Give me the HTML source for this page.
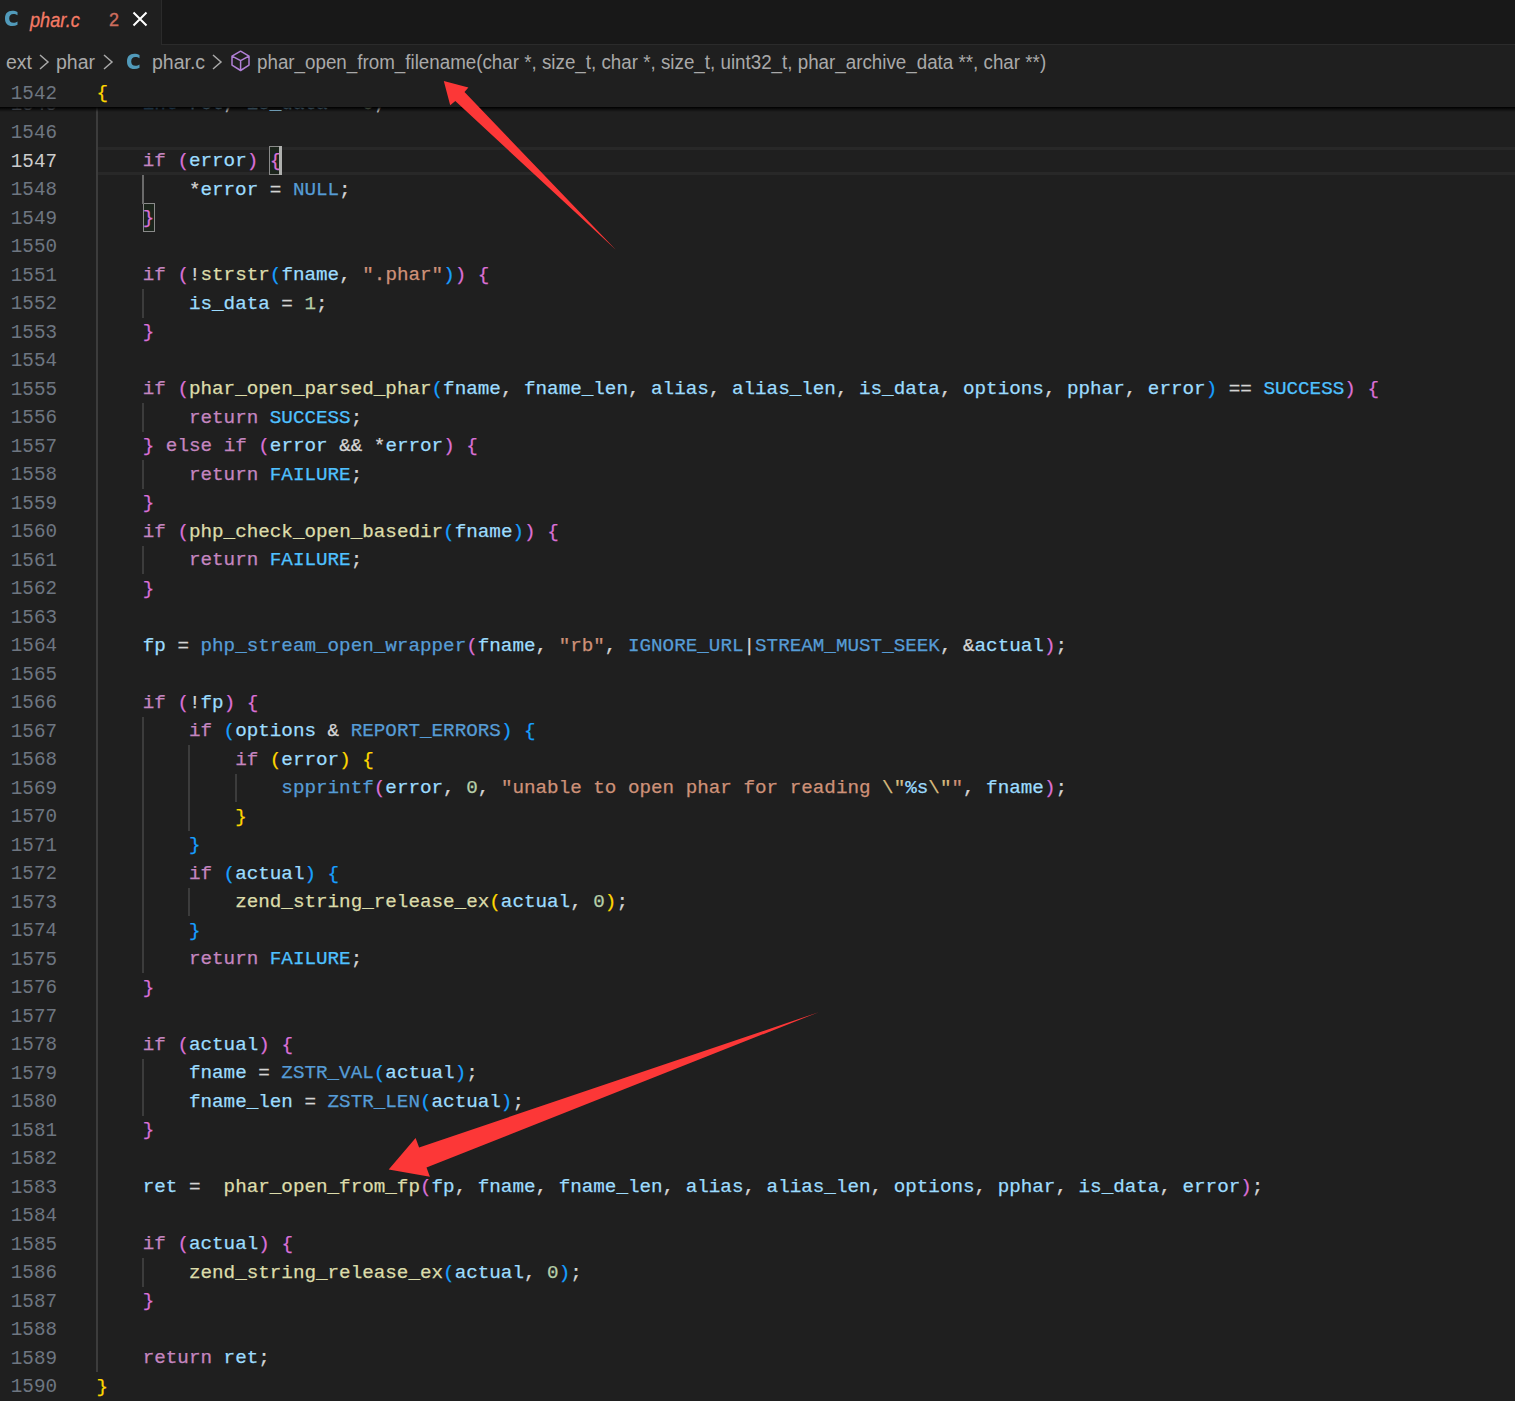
<!DOCTYPE html>
<html><head><meta charset="utf-8">
<style>
*{margin:0;padding:0;box-sizing:border-box}
html,body{width:1515px;height:1401px;overflow:hidden;background:#1f1f1f}
body{position:relative;font-family:"Liberation Sans",sans-serif}
.a{position:absolute;white-space:pre}
#tabs{position:absolute;left:0;top:0;width:1515px;height:45px;background:#181818}
#tab{position:absolute;left:0;top:0;width:161px;height:45px;background:#1f1f1f}
#tabrest{position:absolute;left:161px;top:0;right:0;height:45px;border-left:1px solid #2b2b2b;border-bottom:1px solid #2b2b2b}
.cic{font-weight:bold;color:#519aba;font-size:19px;line-height:20px}
.tabname{font-style:italic;color:#f47a65;font-size:20px;line-height:22px;-webkit-text-stroke:0.3px}
.crumb{color:#a9a9a9;font-size:19.5px;line-height:22px}
.ln{transform:scaleY(1.09);transform-origin:0 9px;position:absolute;left:0;width:57px;text-align:right;height:28.5px;line-height:28.5px;color:#6e7681;font-family:"Liberation Mono",monospace;font-size:19.25px}
.ln.act{color:#cccccc}
.cl{-webkit-text-stroke:0.25px;position:absolute;left:96.5px;height:28.5px;line-height:28.5px;font-family:"Liberation Mono",monospace;font-size:19.25px;white-space:pre;color:#d4d4d4}
.k{color:#c586c0}.t{color:#569cd6}.v{color:#9cdcfe}.f{color:#dcdcaa}.m{color:#569cd6}.c{color:#4fc1ff}
.s{color:#ce9178}.e{color:#d7ba7d}.n{color:#b5cea8}.b1{color:#ffd700}.b2{color:#da70d6}.b3{color:#179fff}
.g{position:absolute;width:2px;background:#3c3c3c}
.g.ga{background:#6a6a6a}
#curline{position:absolute;left:98px;top:146.5px;width:1417px;height:28.5px;border-top:3px solid #282828;border-bottom:3px solid #282828}
.bm{position:absolute;border:1px solid #8a8a8a;background:#1b241b}
#cursor{position:absolute;left:279px;top:146px;width:3px;height:29px;background:#aeafad}
#sticky{position:absolute;left:0;top:80px;width:1515px;height:27px;background:#1f1f1f}
#shadow{position:absolute;left:0;top:107px;width:1515px;height:5px;background:linear-gradient(#000 0%,rgba(0,0,0,0.6) 40%,rgba(0,0,0,0) 100%)}
#arrows{position:absolute;left:0;top:0}
</style></head><body>
<div id="tabs"><div id="tab"></div><div id="tabrest"></div></div>
<svg class="a" style="left:0;top:0" width="24" height="32" viewBox="0 0 24 32"><path fill="#519aba" d="M17.5 12.0C16 11.1 14.2 10.8 12.3 10.8C7.6 10.8 5 13.6 5 18.4C5 23.2 7.6 26 12.3 26C14.2 26 16 25.6 17.5 24.8L17.5 21.5C16.4 22.3 15 22.8 13.4 22.8C10.8 22.8 9.2 21.2 9.2 18.4C9.2 15.6 10.8 14 13.4 14C15 14 16.4 14.5 17.5 15.3Z"/></svg>
<div class="a tabname" style="left:30px;top:9px;transform:scaleX(0.91);transform-origin:0 0">phar.c</div>
<div class="a tabname" style="left:109px;top:9px;font-style:normal;color:#cd6d5e;font-size:18px;-webkit-text-stroke:0.4px">2</div>
<svg class="a" style="left:132px;top:11px" width="16" height="16" viewBox="0 0 16 16"><path d="M1.5 1.5L14.5 14.5M14.5 1.5L1.5 14.5" stroke="#fff" stroke-width="2"/></svg>
<div class="a crumb" style="left:6px;top:51px">ext</div>
<svg class="a" style="left:38px;top:54px" width="12" height="16" viewBox="0 0 12 16"><path d="M2 1L10 8L2 15" stroke="#a9a9a9" stroke-width="1.5" fill="none"/></svg>
<div class="a crumb" style="left:56px;top:51px">phar</div>
<svg class="a" style="left:102px;top:54px" width="12" height="16" viewBox="0 0 12 16"><path d="M2 1L10 8L2 15" stroke="#a9a9a9" stroke-width="1.5" fill="none"/></svg>
<svg class="a" style="left:122.4px;top:43.2px" width="24" height="32" viewBox="0 0 24 32"><path fill="#519aba" d="M17.5 12.0C16 11.1 14.2 10.8 12.3 10.8C7.6 10.8 5 13.6 5 18.4C5 23.2 7.6 26 12.3 26C14.2 26 16 25.6 17.5 24.8L17.5 21.5C16.4 22.3 15 22.8 13.4 22.8C10.8 22.8 9.2 21.2 9.2 18.4C9.2 15.6 10.8 14 13.4 14C15 14 16.4 14.5 17.5 15.3Z"/></svg>
<div class="a crumb" style="left:152px;top:51px">phar.c</div>
<svg class="a" style="left:211px;top:54px" width="12" height="16" viewBox="0 0 12 16"><path d="M2 1L10 8L2 15" stroke="#a9a9a9" stroke-width="1.5" fill="none"/></svg>
<svg class="a" style="left:229px;top:49px" width="23" height="24" viewBox="0 0 23 24"><path d="M11.6 2.2L20.0 7.1V16.1L11.6 21.5L3.0 16.1V7.1Z M3.0 7.1L11.6 11.6L20.0 7.1 M11.6 11.6V21.5" stroke="#b180d7" stroke-width="1.5" fill="none" stroke-linejoin="round"/></svg>
<div class="a crumb" id="fnc" style="left:257px;top:51px;transform:scaleX(0.963);transform-origin:0 0">phar_open_from_filename(char *, size_t, char *, size_t, uint32_t, phar_archive_data **, char **)</div>
<div id="curline"></div>
<div class="bm" style="left:269px;top:146px;width:13px;height:29px"></div>
<div class="bm" style="left:143px;top:203px;width:12px;height:29px"></div>
<div class="g" style="left:96.00px;top:89.50px;height:1282.50px"></div>
<div class="g ga" style="left:142.20px;top:175.00px;height:28.50px"></div>
<div class="g" style="left:142.20px;top:289.00px;height:28.50px"></div>
<div class="g" style="left:142.20px;top:403.00px;height:28.50px"></div>
<div class="g" style="left:142.20px;top:460.00px;height:28.50px"></div>
<div class="g" style="left:142.20px;top:545.50px;height:28.50px"></div>
<div class="g" style="left:142.20px;top:716.50px;height:256.50px"></div>
<div class="g" style="left:142.20px;top:1058.50px;height:57.00px"></div>
<div class="g" style="left:142.20px;top:1258.00px;height:28.50px"></div>
<div class="g" style="left:188.40px;top:745.00px;height:85.50px"></div>
<div class="g" style="left:188.40px;top:887.50px;height:28.50px"></div>
<div class="g" style="left:234.60px;top:773.50px;height:28.50px"></div>
<div class="ln" style="top:89.50px">1545</div>
<div class="cl" style="top:90.30px">    <span class="t">int</span> <span class="v">ret</span>, <span class="v">is_data</span> = <span class="n">0</span>;</div>
<div class="ln" style="top:118.00px">1546</div>
<div class="ln act" style="top:146.50px">1547</div>
<div class="cl" style="top:147.30px">    <span class="k">if</span> <span class="b2">(</span><span class="v">error</span><span class="b2">)</span> <span class="b2">{</span></div>
<div class="ln" style="top:175.00px">1548</div>
<div class="cl" style="top:175.80px">        *<span class="v">error</span> = <span class="m">NULL</span>;</div>
<div class="ln" style="top:203.50px">1549</div>
<div class="cl" style="top:204.30px">    <span class="b2">}</span></div>
<div class="ln" style="top:232.00px">1550</div>
<div class="ln" style="top:260.50px">1551</div>
<div class="cl" style="top:261.30px">    <span class="k">if</span> <span class="b2">(</span>!<span class="f">strstr</span><span class="b3">(</span><span class="v">fname</span>, <span class="s">&quot;</span><span class="s">.phar</span><span class="s">&quot;</span><span class="b3">)</span><span class="b2">)</span> <span class="b2">{</span></div>
<div class="ln" style="top:289.00px">1552</div>
<div class="cl" style="top:289.80px">        <span class="v">is_data</span> = <span class="n">1</span>;</div>
<div class="ln" style="top:317.50px">1553</div>
<div class="cl" style="top:318.30px">    <span class="b2">}</span></div>
<div class="ln" style="top:346.00px">1554</div>
<div class="ln" style="top:374.50px">1555</div>
<div class="cl" style="top:375.30px">    <span class="k">if</span> <span class="b2">(</span><span class="f">phar_open_parsed_phar</span><span class="b3">(</span><span class="v">fname</span>, <span class="v">fname_len</span>, <span class="v">alias</span>, <span class="v">alias_len</span>, <span class="v">is_data</span>, <span class="v">options</span>, <span class="v">pphar</span>, <span class="v">error</span><span class="b3">)</span> == <span class="c">SUCCESS</span><span class="b2">)</span> <span class="b2">{</span></div>
<div class="ln" style="top:403.00px">1556</div>
<div class="cl" style="top:403.80px">        <span class="k">return</span> <span class="c">SUCCESS</span>;</div>
<div class="ln" style="top:431.50px">1557</div>
<div class="cl" style="top:432.30px">    <span class="b2">}</span> <span class="k">else</span> <span class="k">if</span> <span class="b2">(</span><span class="v">error</span> &amp;&amp; *<span class="v">error</span><span class="b2">)</span> <span class="b2">{</span></div>
<div class="ln" style="top:460.00px">1558</div>
<div class="cl" style="top:460.80px">        <span class="k">return</span> <span class="c">FAILURE</span>;</div>
<div class="ln" style="top:488.50px">1559</div>
<div class="cl" style="top:489.30px">    <span class="b2">}</span></div>
<div class="ln" style="top:517.00px">1560</div>
<div class="cl" style="top:517.80px">    <span class="k">if</span> <span class="b2">(</span><span class="f">php_check_open_basedir</span><span class="b3">(</span><span class="v">fname</span><span class="b3">)</span><span class="b2">)</span> <span class="b2">{</span></div>
<div class="ln" style="top:545.50px">1561</div>
<div class="cl" style="top:546.30px">        <span class="k">return</span> <span class="c">FAILURE</span>;</div>
<div class="ln" style="top:574.00px">1562</div>
<div class="cl" style="top:574.80px">    <span class="b2">}</span></div>
<div class="ln" style="top:602.50px">1563</div>
<div class="ln" style="top:631.00px">1564</div>
<div class="cl" style="top:631.80px">    <span class="v">fp</span> = <span class="m">php_stream_open_wrapper</span><span class="b2">(</span><span class="v">fname</span>, <span class="s">&quot;</span><span class="s">rb</span><span class="s">&quot;</span>, <span class="m">IGNORE_URL</span>|<span class="m">STREAM_MUST_SEEK</span>, &amp;<span class="v">actual</span><span class="b2">)</span>;</div>
<div class="ln" style="top:659.50px">1565</div>
<div class="ln" style="top:688.00px">1566</div>
<div class="cl" style="top:688.80px">    <span class="k">if</span> <span class="b2">(</span>!<span class="v">fp</span><span class="b2">)</span> <span class="b2">{</span></div>
<div class="ln" style="top:716.50px">1567</div>
<div class="cl" style="top:717.30px">        <span class="k">if</span> <span class="b3">(</span><span class="v">options</span> &amp; <span class="m">REPORT_ERRORS</span><span class="b3">)</span> <span class="b3">{</span></div>
<div class="ln" style="top:745.00px">1568</div>
<div class="cl" style="top:745.80px">            <span class="k">if</span> <span class="b1">(</span><span class="v">error</span><span class="b1">)</span> <span class="b1">{</span></div>
<div class="ln" style="top:773.50px">1569</div>
<div class="cl" style="top:774.30px">                <span class="m">spprintf</span><span class="b2">(</span><span class="v">error</span>, <span class="n">0</span>, <span class="s">&quot;</span><span class="s">unable to open phar for reading </span><span class="e">\&quot;</span><span class="v">%s</span><span class="e">\&quot;</span><span class="s">&quot;</span>, <span class="v">fname</span><span class="b2">)</span>;</div>
<div class="ln" style="top:802.00px">1570</div>
<div class="cl" style="top:802.80px">            <span class="b1">}</span></div>
<div class="ln" style="top:830.50px">1571</div>
<div class="cl" style="top:831.30px">        <span class="b3">}</span></div>
<div class="ln" style="top:859.00px">1572</div>
<div class="cl" style="top:859.80px">        <span class="k">if</span> <span class="b3">(</span><span class="v">actual</span><span class="b3">)</span> <span class="b3">{</span></div>
<div class="ln" style="top:887.50px">1573</div>
<div class="cl" style="top:888.30px">            <span class="f">zend_string_release_ex</span><span class="b1">(</span><span class="v">actual</span>, <span class="n">0</span><span class="b1">)</span>;</div>
<div class="ln" style="top:916.00px">1574</div>
<div class="cl" style="top:916.80px">        <span class="b3">}</span></div>
<div class="ln" style="top:944.50px">1575</div>
<div class="cl" style="top:945.30px">        <span class="k">return</span> <span class="c">FAILURE</span>;</div>
<div class="ln" style="top:973.00px">1576</div>
<div class="cl" style="top:973.80px">    <span class="b2">}</span></div>
<div class="ln" style="top:1001.50px">1577</div>
<div class="ln" style="top:1030.00px">1578</div>
<div class="cl" style="top:1030.80px">    <span class="k">if</span> <span class="b2">(</span><span class="v">actual</span><span class="b2">)</span> <span class="b2">{</span></div>
<div class="ln" style="top:1058.50px">1579</div>
<div class="cl" style="top:1059.30px">        <span class="v">fname</span> = <span class="m">ZSTR_VAL</span><span class="b3">(</span><span class="v">actual</span><span class="b3">)</span>;</div>
<div class="ln" style="top:1087.00px">1580</div>
<div class="cl" style="top:1087.80px">        <span class="v">fname_len</span> = <span class="m">ZSTR_LEN</span><span class="b3">(</span><span class="v">actual</span><span class="b3">)</span>;</div>
<div class="ln" style="top:1115.50px">1581</div>
<div class="cl" style="top:1116.30px">    <span class="b2">}</span></div>
<div class="ln" style="top:1144.00px">1582</div>
<div class="ln" style="top:1172.50px">1583</div>
<div class="cl" style="top:1173.30px">    <span class="v">ret</span> =  <span class="f">phar_open_from_fp</span><span class="b2">(</span><span class="v">fp</span>, <span class="v">fname</span>, <span class="v">fname_len</span>, <span class="v">alias</span>, <span class="v">alias_len</span>, <span class="v">options</span>, <span class="v">pphar</span>, <span class="v">is_data</span>, <span class="v">error</span><span class="b2">)</span>;</div>
<div class="ln" style="top:1201.00px">1584</div>
<div class="ln" style="top:1229.50px">1585</div>
<div class="cl" style="top:1230.30px">    <span class="k">if</span> <span class="b2">(</span><span class="v">actual</span><span class="b2">)</span> <span class="b2">{</span></div>
<div class="ln" style="top:1258.00px">1586</div>
<div class="cl" style="top:1258.80px">        <span class="f">zend_string_release_ex</span><span class="b3">(</span><span class="v">actual</span>, <span class="n">0</span><span class="b3">)</span>;</div>
<div class="ln" style="top:1286.50px">1587</div>
<div class="cl" style="top:1287.30px">    <span class="b2">}</span></div>
<div class="ln" style="top:1315.00px">1588</div>
<div class="ln" style="top:1343.50px">1589</div>
<div class="cl" style="top:1344.30px">    <span class="k">return</span> <span class="v">ret</span>;</div>
<div class="ln" style="top:1372.00px">1590</div>
<div class="cl" style="top:1372.80px"><span class="b1">}</span></div>
<div id="cursor"></div>
<div id="sticky"></div><div id="shadow"></div>
<div class="ln" style="top:79px">1542</div>
<div class="cl" style="top:79px"><span class="b1">{</span></div>
<svg id="arrows" width="1515" height="1401" viewBox="0 0 1515 1401">
<polygon fill="#fc3737" points="443.8,81 468.4,87.4 464.5,92.1 615.8,249.7 455.3,101.1 450.2,105.2"/>
<polygon fill="#fc3737" points="388.7,1169.6 415.6,1137.9 419.1,1147.4 818.7,1012.2 426.5,1167.5 429.9,1176.7"/>
</svg>
</body></html>
